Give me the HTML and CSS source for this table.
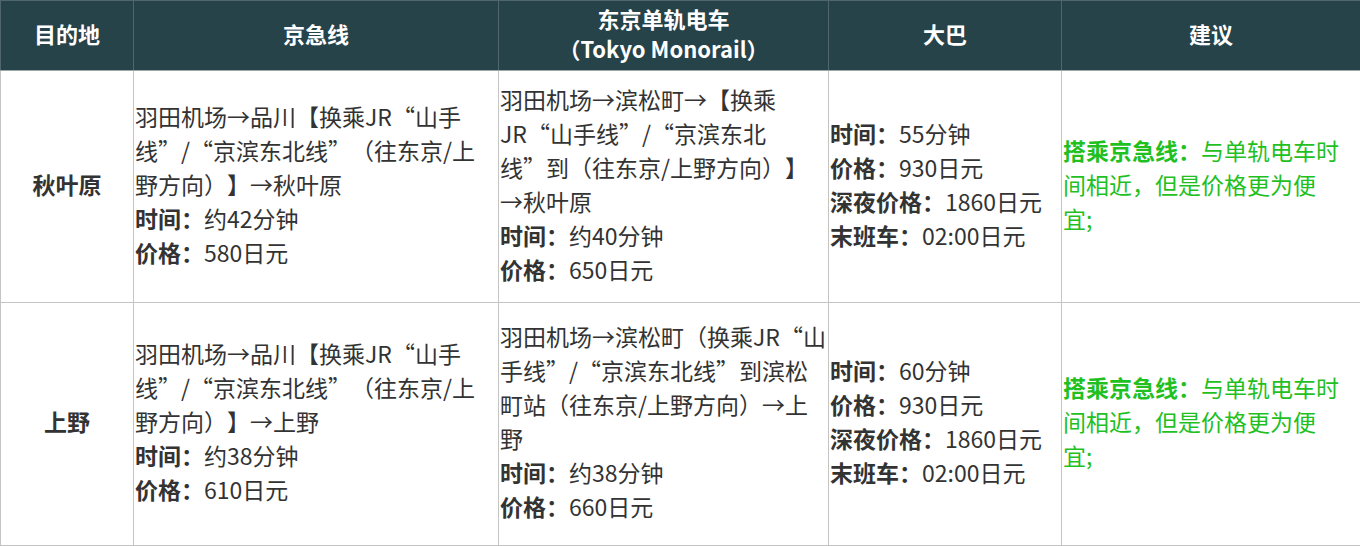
FILE: index.html
```html
<!DOCTYPE html>
<html lang="zh-CN">
<head>
<meta charset="utf-8">
<link rel="stylesheet" href="styles.css">
</head>
<body>
<table class="route-table">
  <colgroup>
    <col class="c1"><col class="c2"><col class="c3"><col class="c4"><col class="c5">
  </colgroup>
  <thead>
    <tr>
      <th>目的地</th>
      <th>京急线</th>
      <th>东京单轨电车<br>（Tokyo Monorail）</th>
      <th>大巴</th>
      <th>建议</th>
    </tr>
  </thead>
  <tbody>
    <tr class="row1">
      <td class="dest">秋叶原</td>
      <td>羽田机场→品川【换乘JR“山手<br>线”/“京滨东北线”（往东京/上<br>野方向）】→秋叶原<br><b>时间：</b>约42分钟<br><b>价格：</b>580日元</td>
      <td>羽田机场→滨松町→【换乘<br>JR“山手线”/“京滨东北<br>线”到（往东京/上野方向）】<br>→秋叶原<br><b>时间：</b>约40分钟<br><b>价格：</b>650日元</td>
      <td><b>时间：</b>55分钟<br><b>价格：</b>930日元<br><b>深夜价格：</b>1860日元<br><b>末班车：</b>02:00日元</td>
      <td class="tip"><b>搭乘京急线：</b>与单轨电车时<br>间相近，但是价格更为便<br>宜;</td>
    </tr>
    <tr class="row2">
      <td class="dest">上野</td>
      <td>羽田机场→品川【换乘JR“山手<br>线”/“京滨东北线”（往东京/上<br>野方向）】→上野<br><b>时间：</b>约38分钟<br><b>价格：</b>610日元</td>
      <td>羽田机场→滨松町（换乘JR“山<br>手线”/“京滨东北线”到滨松<br>町站（往东京/上野方向）→上<br>野<br><b>时间：</b>约38分钟<br><b>价格：</b>660日元</td>
      <td><b>时间：</b>60分钟<br><b>价格：</b>930日元<br><b>深夜价格：</b>1860日元<br><b>末班车：</b>02:00日元</td>
      <td class="tip"><b>搭乘京急线：</b>与单轨电车时<br>间相近，但是价格更为便<br>宜;</td>
    </tr>
  </tbody>
</table>
</body>
</html>
```
FILE: styles.css
```css
html, body {
  margin: 0;
  padding: 0;
  background: #ffffff;
}
body {
  font-family: "Noto Sans CJK SC", "Noto Sans", sans-serif;
  color: #333333;
  text-spacing-trim: space-all;
}
.route-table {
  width: 1360px;
  border-collapse: collapse;
  table-layout: fixed;
}
.c1 { width: 133px; }
.c2 { width: 365px; }
.c3 { width: 330px; }
.c4 { width: 233px; }
.c5 { width: 299px; }

.route-table th {
  background: #26434a;
  color: #ffffff;
  font-weight: 700;
  font-size: 22px;
  line-height: 30px;
  height: 70px;
  padding: 0 1px 5px;
  text-align: center;
  vertical-align: middle;
  border: 1px solid #4f666b;
  border-bottom-color: #9aa6a8;
  box-sizing: border-box;
  text-spacing-trim: space-all;
}
.route-table td {
  font-size: 23px;
  line-height: 34px;
  padding: 0 1px 6px 1px;
  vertical-align: middle;
  border: 1px solid #c4c4c4;
  text-align: left;
  white-space: nowrap;
  text-spacing-trim: space-all;
}
.route-table td b {
  font-weight: 700;
}
.row1 td { height: 225px; }
.row2 td { height: 236px; }
.route-table td.dest {
  text-align: center;
  font-weight: 700;
}
.route-table td.tip {
  color: #1fc01f;
}
```
